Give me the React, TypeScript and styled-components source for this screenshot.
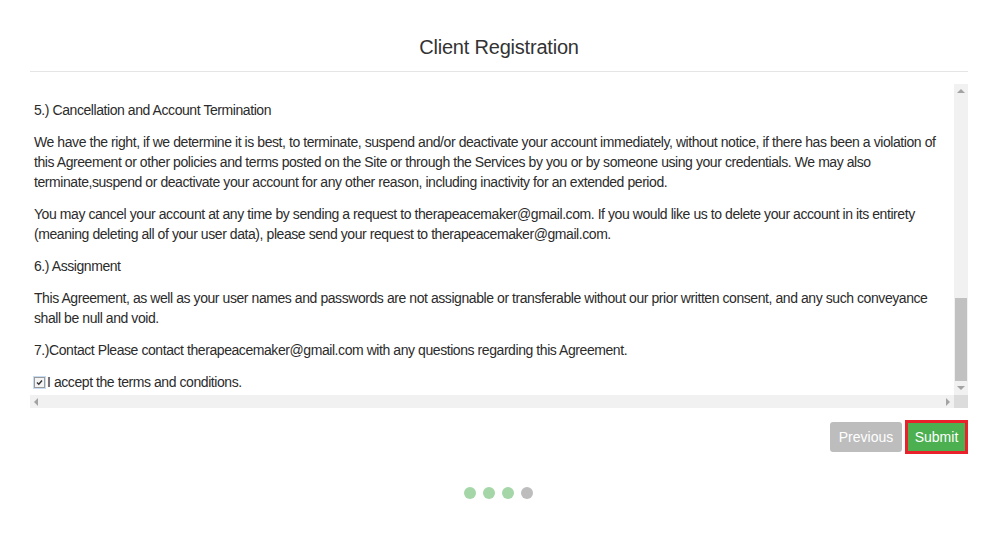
import React from "react";
import styled, { createGlobalStyle } from "styled-components";

const Global = createGlobalStyle`
  html, body { margin: 0; padding: 0; background: #fff; }
  body { font-family: "Liberation Sans", Arial, sans-serif; color: #333; }
`;

const Page = styled.div`
  width: 938px;
  margin-left: 30px;
`;

const Header = styled.div`
  height: 72px;
  border-bottom: 1px solid #e5e5e5;
  box-sizing: border-box;
  padding-top: 33px;
  text-align: center;
`;

const Title = styled.h2`
  margin: 0;
  font-size: 20px;
  line-height: 28px;
  font-weight: 400;
  color: #333;
  letter-spacing: -0.2px;
`;

const ScrollBox = styled.div`
  margin-top: 12px;
  display: grid;
  grid-template-columns: 1fr 14px;
  grid-template-rows: 311px 13px;
`;

const Viewport = styled.div`
  overflow: hidden;
  padding: 16px 16px 0 4px;
  font-size: 14px;
  line-height: 20px;
  letter-spacing: -0.43px;
  color: #2b2b2b;
`;

const Para = styled.p`
  margin: 0 0 12px;
`;

const CheckRow = styled.label`
  display: flex;
  align-items: center;
`;

const CheckHalo = styled.span`
  display: inline-flex;
  align-items: center;
  justify-content: center;
  width: 13px;
  height: 13px;
  background: #c7dcf3;
  margin-left: -1px;
  margin-right: 1px;
`;

const CheckBox = styled.span`
  display: inline-flex;
  align-items: center;
  justify-content: center;
  width: 9px;
  height: 9px;
  border: 1px solid #9a9a9a;
  background: #f4f4f4;
`;

const VBar = styled.div`
  background: #f1f1f1;
  display: flex;
  flex-direction: column;
`;

const HBar = styled.div`
  background: #f1f1f1;
  display: flex;
  align-items: center;
  justify-content: space-between;
  padding: 0 4px;
`;

const Corner = styled.div`
  background: #dcdcdc;
`;

const Arrow = styled.div`
  height: 14px;
  display: flex;
  align-items: center;
  justify-content: center;
  flex: none;
`;

const Track = styled.div`
  flex: 1;
  display: flex;
  flex-direction: column;
  justify-content: flex-end;
  padding: 0 1px;
`;

const Thumb = styled.div`
  height: 83px;
  background: #c1c1c1;
`;

const ButtonRow = styled.div`
  display: flex;
  justify-content: flex-end;
  align-items: center;
  gap: 3px;
  margin-top: 11px;
  height: 35px;
`;

const Button = styled.button<{ $variant: "grey" | "green" }>`
  font-family: "Liberation Sans", Arial, sans-serif;
  font-size: 14px;
  color: #fff;
  border-radius: 3px;
  cursor: pointer;
  padding: 0;
  box-sizing: border-box;
  ${(p) =>
    p.$variant === "grey"
      ? `background:#bdbdbd; border:none; width:72px; height:30px; margin-top:1px;`
      : `background:#4caf50; border:3px solid #e8212a; border-radius:0; width:63px; height:34px; margin-top:1px;`}
`;

const Dots = styled.div`
  display: flex;
  justify-content: center;
  gap: 7px;
  margin-top: 33px;
  padding-right: 2px;
`;

const Dot = styled.span<{ $done: boolean }>`
  width: 12px;
  height: 12px;
  border-radius: 50%;
  background: ${(p) => (p.$done ? "#a5d6a7" : "#bdbdbd")};
`;

const Tri = ({ dir }: { dir: "up" | "down" | "left" | "right" }) => {
  const pts = {
    up: "0,4 4,0 8,4",
    down: "0,0 8,0 4,4",
    left: "4,0 4,8 0,4",
    right: "0,0 0,8 4,4",
  }[dir];
  const vertical = dir === "up" || dir === "down";
  return (
    <svg width={vertical ? 8 : 4} height={vertical ? 4 : 8} viewBox={vertical ? "0 0 8 4" : "0 0 4 8"}>
      <polygon points={pts} fill="#a3a3a3" />
    </svg>
  );
};

export default function App() {
  return (
    <>
      <Global />
      <Page>
        <Header>
          <Title>Client Registration</Title>
        </Header>
        <ScrollBox>
          <Viewport>
            <Para>5.) Cancellation and Account Termination</Para>
            <Para>
              We have the right, if we determine it is best, to terminate, suspend and/or deactivate your account
              immediately, without notice, if there has been a violation of this Agreement or other policies and terms
              posted on the Site or through the Services by you or by someone using your credentials. We may also
              terminate,suspend or deactivate your account for any other reason, including inactivity for an extended
              period.
            </Para>
            <Para>
              You may cancel your account at any time by sending a request to therapeacemaker@gmail.com. If you would
              like us to delete your account in its entirety (meaning deleting all of your user data), please send your
              request to therapeacemaker@gmail.com.
            </Para>
            <Para>6.) Assignment</Para>
            <Para>
              This Agreement, as well as your user names and passwords are not assignable or transferable without our
              prior written consent, and any such conveyance shall be null and void.
            </Para>
            <Para>7.)Contact Please contact therapeacemaker@gmail.com with any questions regarding this Agreement.</Para>
            <CheckRow>
              <CheckHalo>
                <CheckBox>
                  <svg width="7" height="7" viewBox="0 0 7 7">
                    <path d="M1 3.5 L2.8 5.3 L6 1.5" stroke="#333" strokeWidth="1.4" fill="none" />
                  </svg>
                </CheckBox>
              </CheckHalo>
              <span>I accept the terms and conditions.</span>
            </CheckRow>
          </Viewport>
          <VBar>
            <Arrow>
              <Tri dir="up" />
            </Arrow>
            <Track>
              <Thumb />
            </Track>
            <Arrow>
              <Tri dir="down" />
            </Arrow>
          </VBar>
          <HBar>
            <Tri dir="left" />
            <Tri dir="right" />
          </HBar>
          <Corner />
        </ScrollBox>
        <ButtonRow>
          <Button $variant="grey">Previous</Button>
          <Button $variant="green">Submit</Button>
        </ButtonRow>
        <Dots>
          <Dot $done />
          <Dot $done />
          <Dot $done />
          <Dot $done={false} />
        </Dots>
      </Page>
    </>
  );
}
